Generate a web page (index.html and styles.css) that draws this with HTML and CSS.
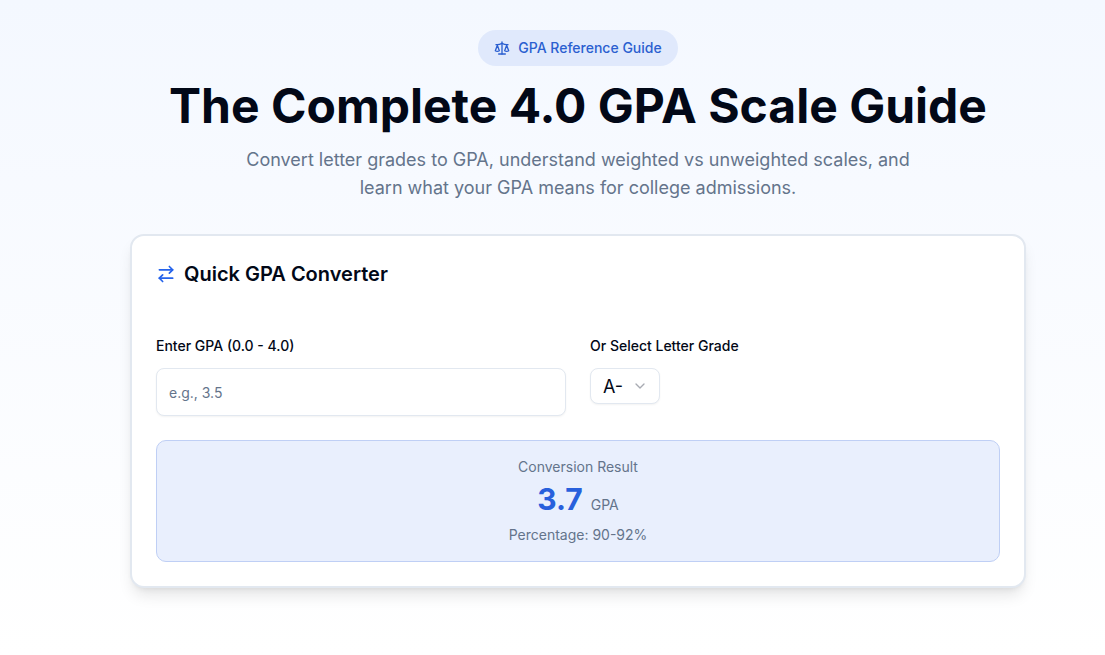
FILE: index.html
```html
<!DOCTYPE html>
<html lang="en">
<head>
    <meta charset="UTF-8">
    <meta name="viewport" content="width=device-width, initial-scale=1.0">
    <title>GPA Scale Guide</title>
    <link rel="stylesheet" href="styles.css">
</head>
<body>
    <main class="page">
        <header class="hero">
            <div class="badge">
                <svg class="badge-icon" viewBox="0 0 24 24" aria-hidden="true">
                    <path d="m16 16 3-8 3 8c-.87.65-1.92 1-3 1s-2.13-.35-3-1Z"/>
                    <path d="m2 16 3-8 3 8c-.87.65-1.92 1-3 1s-2.13-.35-3-1Z"/>
                    <path d="M7 21h10"/>
                    <path d="M12 3v18"/>
                    <path d="M3 7h2c2 0 5-1 7-2 2 1 5 2 7 2h2"/>
                </svg>
                <span>GPA Reference Guide</span>
            </div>
            <h1>The Complete 4.0 GPA Scale Guide</h1>
            <p class="subtitle">Convert letter grades to GPA, understand weighted vs unweighted scales, and learn what your GPA means for college admissions.</p>
        </header>

        <section class="card">
            <h2 class="card-title">
                <svg class="title-icon" viewBox="0 0 24 24" aria-hidden="true">
                    <path d="m16 3 4 4-4 4"/>
                    <path d="M20 7H4"/>
                    <path d="m8 21-4-4 4-4"/>
                    <path d="M4 17h16"/>
                </svg>
                Quick GPA Converter
            </h2>

            <form class="converter">
                <div class="form-group">
                    <label for="gpa">Enter GPA (0.0 - 4.0)</label>
                    <input type="text" id="gpa" inputmode="decimal" placeholder="e.g., 3.5">
                </div>
                <div class="form-group">
                    <label for="grade">Or Select Letter Grade</label>
                    <div class="select-wrap">
                        <select id="grade">
                            <option>A+</option>
                            <option>A</option>
                            <option selected>A-</option>
                            <option>B+</option>
                            <option>B</option>
                            <option>B-</option>
                        </select>
                        <svg class="chevron" viewBox="0 0 24 24" aria-hidden="true">
                            <path d="m6 9 6 6 6-6"/>
                        </svg>
                    </div>
                </div>
            </form>

            <div class="result">
                <p>Conversion Result</p>
                <p class="result-value"><strong>3.7</strong> <span>GPA</span></p>
                <p>Percentage: 90-92%</p>
            </div>
        </section>
    </main>
</body>
</html>
```
FILE: styles.css
```css
* {
    box-sizing: border-box;
}
body {
    margin: 0;
    min-height: 100vh;
    font-family: Inter, "Liberation Sans", sans-serif;
    color: #020817;
    background: linear-gradient(to bottom, #f4f8ff, #ffffff) no-repeat;
}
h1, h2, p {
    margin: 0;
}
svg {
    fill: none;
    stroke: currentColor;
    stroke-width: 2;
    stroke-linecap: round;
    stroke-linejoin: round;
}
.page {
    padding: 30px 24px 64px 75px;
}
.hero {
    display: flex;
    flex-direction: column;
    align-items: center;
    text-align: center;
    margin-bottom: 32px;
}
.badge {
    display: flex;
    align-items: center;
    gap: 8px;
    padding: 8px 16px;
    border-radius: 18px;
    background-color: #e0e9fc;
    color: #2b5fd0;
    font-size: 14px;
    line-height: 20px;
    font-weight: 500;
}
.badge-icon {
    width: 16px;
    height: 16px;
}
h1 {
    margin: 16px 0;
    font-size: 48px;
    line-height: 48px;
    font-weight: 700;
}
.subtitle {
    max-width: 672px;
    font-size: 18px;
    line-height: 28px;
    color: #64748b;
}
.card {
    max-width: 896px;
    margin: 0 auto;
    padding: 24px;
    background-color: #ffffff;
    border: 2px solid #e2e8f0;
    border-radius: 14px;
    box-shadow: 0 10px 15px -3px rgba(0, 0, 0, 0.1), 0 4px 6px -4px rgba(0, 0, 0, 0.1);
}
.card-title {
    display: flex;
    align-items: center;
    gap: 8px;
    margin-bottom: 48px;
    font-size: 20px;
    line-height: 28px;
    font-weight: 600;
}
.title-icon {
    width: 20px;
    height: 20px;
    color: #2563eb;
}
.converter {
    display: grid;
    grid-template-columns: 1fr 1fr;
    gap: 24px;
    margin-bottom: 24px;
}
label {
    display: block;
    margin-bottom: 12px;
    font-size: 14px;
    line-height: 20px;
    font-weight: 500;
}
input,
select {
    display: block;
    padding: 0 12px;
    border: 1px solid #e2e8f0;
    border-radius: 8px;
    background-color: #ffffff;
    color: inherit;
    font-family: inherit;
    box-shadow: 0 1px 2px rgba(0, 0, 0, 0.05);
}
input {
    width: 100%;
    height: 48px;
    font-size: 14px;
}
input::placeholder {
    color: #64748b;
}
.select-wrap {
    display: inline-grid;
    align-items: center;
}
.select-wrap > * {
    grid-area: 1 / 1;
}
select {
    appearance: none;
    width: 70px;
    height: 36px;
    font-size: 18px;
}
.chevron {
    justify-self: end;
    width: 16px;
    height: 16px;
    margin-right: 12px;
    color: #a8abb2;
    pointer-events: none;
}
.result {
    padding: 16px;
    border: 1px solid #bfcff5;
    border-radius: 10px;
    background-color: #e9effd;
    color: #64748b;
    font-size: 14px;
    line-height: 20px;
    text-align: center;
}
.result-value {
    margin: 4px 0 8px;
}
.result-value strong {
    margin-right: 4px;
    font-size: 30px;
    line-height: 36px;
    color: #2860dc;
}
```
